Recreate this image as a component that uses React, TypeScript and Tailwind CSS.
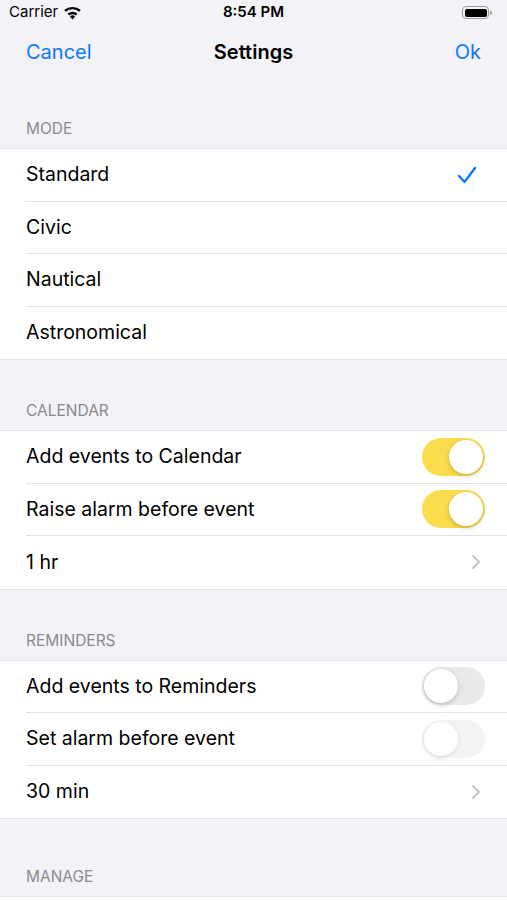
import React from "react";

const font = { fontFamily: "Inter, 'Noto Sans', sans-serif" };

function Toggle({ on, faded }: { on: boolean; faded?: boolean }) {
  return (
    <div
      className={`relative h-[38px] w-[63px] rounded-full ${
        on ? "bg-[#fbdc4c]" : "bg-[#e9e9eb]"
      } ${faded ? "opacity-50" : ""}`}
    >
      <div
        className={`absolute top-[2px] h-[34px] w-[34px] rounded-full bg-white shadow-[0_2px_5px_rgba(0,0,0,0.2)] ${
          on ? "left-[27px]" : "left-[2px]"
        }`}
      />
    </div>
  );
}

function Chevron() {
  return (
    <svg className="mr-[4px]" width="10" height="16" viewBox="0 0 10 16" fill="none">
      <path d="M2 2l6 6-6 6" stroke="#c4c4c7" strokeWidth="2" strokeLinecap="round" strokeLinejoin="round" />
    </svg>
  );
}

function Check() {
  return (
    <svg className="mr-[8px]" width="20" height="18" viewBox="0 0 20 18" fill="none">
      <path d="M2 10l5.5 6L18 2" stroke="#0a7aff" strokeWidth="2.4" strokeLinecap="round" strokeLinejoin="round" />
    </svg>
  );
}

type Row = { label: string; right?: React.ReactNode };

function Header({ title, tall }: { title: string; tall?: boolean }) {
  return (
    <div
      className={`flex items-end px-[26px] pb-[10px] text-[15.5px] leading-[18px] text-[#8a8a8e] ${
        tall ? "h-[77px]" : "h-[70px]"
      }`}
    >
      {title}
    </div>
  );
}

function Section({ rows }: { rows: Row[] }) {
  return (
    <div className="border-y border-[#e3e3e6] bg-white">
      {rows.map((r, i) => (
        <div key={r.label} className="pl-[26px]">
          <div
            className={`flex h-[52.5px] items-center justify-between pr-[22px] ${
              i < rows.length - 1 ? "border-b border-[#e3e3e6]" : ""
            }`}
          >
            <span className="text-[19.5px] text-black">{r.label}</span>
            {r.right}
          </div>
        </div>
      ))}
    </div>
  );
}

export default function App() {
  return (
    <div className="h-[900px] w-[507px] overflow-hidden bg-[#f2f2f7]" style={font}>
      {/* Status bar */}
      <div className="relative flex h-[25px] items-center px-[9px]">
        <span className="text-[15px] text-black">Carrier</span>
        <svg className="ml-[5px]" width="19" height="14" viewBox="0 0 19 14">
          <path d="M9.5 13.5l2.6-3.1a4 4 0 0 0-5.2 0z" fill="black" />
          <path d="M4.6 7.6l1.6 1.9a5.2 5.2 0 0 1 6.6 0l1.6-1.9a7.7 7.7 0 0 0-9.8 0z" fill="black" />
          <path d="M1.2 3.9l1.6 1.9a10.4 10.4 0 0 1 13.4 0l1.6-1.9a12.9 12.9 0 0 0-16.6 0z" fill="black" />
        </svg>
        <span className="absolute left-1/2 -translate-x-1/2 text-[15px] font-semibold text-black">8:54 PM</span>
        <div className="ml-auto mr-[6px] flex items-center">
          <div className="rounded-[4px] border border-[#9a9a9a] p-[1.5px]">
            <div className="h-[8px] w-[22px] rounded-[2px] bg-black" />
          </div>
          <div className="ml-[1px] h-[4px] w-[2px] rounded-r-sm bg-[#9a9a9a]" />
        </div>
      </div>

      {/* Nav bar */}
      <div className="relative flex h-[53px] items-center px-[26px]">
        <span className="text-[20px] text-[#0a7aff]">Cancel</span>
        <span className="absolute left-1/2 -translate-x-1/2 text-[20px] font-semibold text-black">Settings</span>
        <span className="ml-auto text-[20px] text-[#0a7aff]">Ok</span>
      </div>

      <Header title="MODE" />
      <Section
        rows={[
          { label: "Standard", right: <Check /> },
          { label: "Civic" },
          { label: "Nautical" },
          { label: "Astronomical" },
        ]}
      />

      <Header title="CALENDAR" />
      <Section
        rows={[
          { label: "Add events to Calendar", right: <Toggle on /> },
          { label: "Raise alarm before event", right: <Toggle on /> },
          { label: "1 hr", right: <Chevron /> },
        ]}
      />

      <Header title="REMINDERS" />
      <Section
        rows={[
          { label: "Add events to Reminders", right: <Toggle on={false} /> },
          { label: "Set alarm before event", right: <Toggle on={false} faded /> },
          { label: "30 min", right: <Chevron /> },
        ]}
      />

      <Header title="MANAGE" tall />
      <div className="h-[60px] border-t border-[#e3e3e6] bg-white" />
    </div>
  );
}
